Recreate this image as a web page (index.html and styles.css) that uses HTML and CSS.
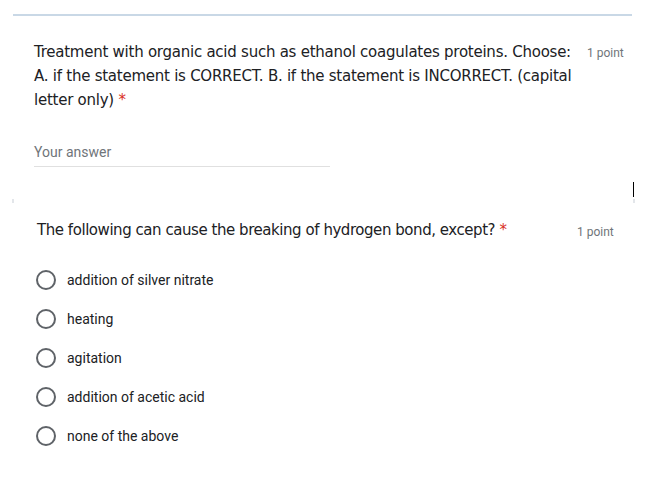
FILE: index.html
```html
<!DOCTYPE html>
<html lang="en">
<head>
<meta charset="utf-8">
<title>Quiz</title>
<link rel="stylesheet" href="styles.css">
</head>
<body>
<div class="page">
  <div class="rule"></div>

  <section class="question q1">
    <div class="q-head">
      <div class="q-title">Treatment with organic acid such as ethanol coagulates proteins. Choose: A. if the statement is CORRECT. B. if the statement is INCORRECT. (capital letter only) <span class="req">*</span></div>
      <div class="pts">1 point</div>
    </div>
    <div class="answer">Your answer</div>
  </section>

  <div class="gap">
    <span class="corner left"></span>
    <span class="corner right"></span>
    <span class="caret"></span>
  </div>

  <section class="question q2">
    <div class="q-head">
      <div class="q-title">The following can cause the breaking of hydrogen bond, except? <span class="req">*</span></div>
      <div class="pts">1 point</div>
    </div>
    <ul class="options">
      <li class="option"><span class="radio"></span><span>addition of silver nitrate</span></li>
      <li class="option"><span class="radio"></span><span>heating</span></li>
      <li class="option"><span class="radio"></span><span>agitation</span></li>
      <li class="option"><span class="radio"></span><span>addition of acetic acid</span></li>
      <li class="option"><span class="radio"></span><span>none of the above</span></li>
    </ul>
  </section>
</div>
</body>
</html>
```

FILE: styles.css
```css
* { box-sizing: border-box; }
html, body { margin: 0; padding: 0; background: #ffffff; }
body { font-family: Roboto, "Noto Sans", sans-serif; color: #202124; }

.page { width: 666px; height: 477px; overflow: hidden; padding-top: 14px; }

.rule {
  margin-left: 13px;
  width: 619px;
  height: 2px;
  background: #c9d8e6;
}

.question { display: flex; flex-direction: column; }

.q-head { display: flex; align-items: flex-start; }

.q-title {
  font-family: "DejaVu Sans", sans-serif;
  font-size: 15px;
  line-height: 24px;
  color: #202124;
  letter-spacing: -0.25px;
}

.req { color: #d93025; }

.pts {
  font-family: Roboto, sans-serif;
  font-size: 12px;
  color: #70757a;
  line-height: 24px;
  white-space: nowrap;
}

.q1 { padding: 24px 0 0 34px; }
.q1 .q-title { width: 545px; }
.q1 .pts { margin-left: 8px; margin-top: 1px; }

.answer {
  margin-top: 30px;
  width: 296px;
  font-size: 14px;
  line-height: 20px;
  color: #70757a;
  padding-bottom: 4px;
  border-bottom: 1px solid #e0e0e0;
}

.gap { position: relative; height: 51px; }
.corner { position: absolute; top: 32px; width: 2px; height: 4px; background: #e3e6ea; }
.corner.left { left: 12px; }
.corner.right { left: 633px; }
.caret { position: absolute; left: 633px; top: 15px; width: 1px; height: 15px; background: #000; }

.q2 { padding-left: 37px; }
.q2 .q-title { width: 540px; letter-spacing: -0.45px; }
.q2 .pts { margin-top: 2px; }

.options { list-style: none; margin: 16px 0 0 -37px; padding: 0 0 0 36px; }
.option {
  display: flex;
  align-items: center;
  height: 39.2px;
  font-size: 14px;
  color: #202124;
}
.radio {
  width: 20px;
  height: 20px;
  border: 2px solid #5f6368;
  border-radius: 50%;
  margin-right: 11px;
  flex: none;
}
```
